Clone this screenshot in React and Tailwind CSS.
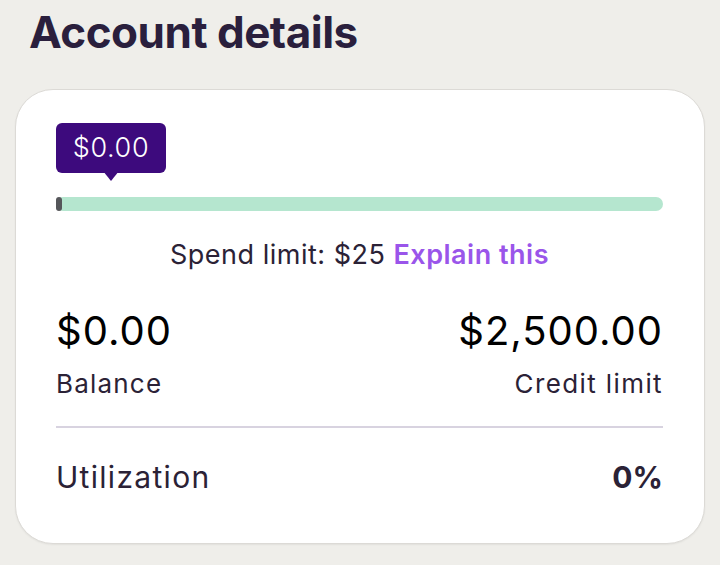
import React from "react";

const font = { fontFamily: "Inter, 'Noto Sans', sans-serif" };

export default function App() {
  return (
    <div
      className="w-[720px] h-[565px] bg-[#efeeea] overflow-hidden"
      style={font}
    >
      <h1 className="pl-[29px] pt-[7px] text-[44px] leading-[50px] font-bold text-[#2a1f3d] tracking-[-0.5px]">
        Account details
      </h1>

      <div className="mx-[15px] mt-[32px] bg-white rounded-[38px] border border-[#dcdad6] shadow-[0_1px_2px_rgba(0,0,0,0.06)] pl-[40px] pr-[41px] pt-[33px] pb-[47px]">
        {/* tooltip */}
        <div className="relative w-[110px] h-[50px] rounded-[6px] bg-[#3d0a7d] flex items-center justify-center">
          <span className="text-white text-[27px] leading-[32px] font-light tracking-[0.6px]">
            $0.00
          </span>
          <div className="absolute left-[47px] top-[48px] w-0 h-0 border-l-[8px] border-r-[8px] border-t-[10px] border-l-transparent border-r-transparent border-t-[#3d0a7d]" />
        </div>

        {/* progress bar */}
        <div className="mt-[24px] h-[14px] rounded-full bg-[#b5e6cf] flex items-center">
          <div className="w-[6px] h-[14px] rounded-full bg-[#55565a]" />
        </div>

        <p className="mt-[26px] text-center text-[27px] leading-[36px] text-[#2b2236] tracking-[0.5px]">
          Spend limit: $25{" "}
          <span className="text-[#9a55ea] font-semibold">Explain this</span>
        </p>

        <div className="mt-[35px] flex justify-between items-start">
          <div>
            <div className="text-[40px] leading-[46px] text-black tracking-[1px]">
              $0.00
            </div>
            <div className="mt-[14px] text-[26px] leading-[32px] text-[#2b2236] tracking-[1.2px]">
              Balance
            </div>
          </div>
          <div className="text-right">
            <div className="text-[40px] leading-[46px] text-black tracking-[1px]">
              $2,500.00
            </div>
            <div className="mt-[14px] text-[26px] leading-[32px] text-[#2b2236] tracking-[1.4px]">
              Credit limit
            </div>
          </div>
        </div>

        <div className="mt-[26px] h-[2px] bg-[#d8d3e0]" />

        <div className="mt-[30px] flex justify-between items-center">
          <span className="text-[30px] leading-[38px] text-[#2b2236] tracking-[1.3px]">
            Utilization
          </span>
          <span className="text-[30px] leading-[38px] font-bold text-[#2b2236]">
            0%
          </span>
        </div>
      </div>
    </div>
  );
}
